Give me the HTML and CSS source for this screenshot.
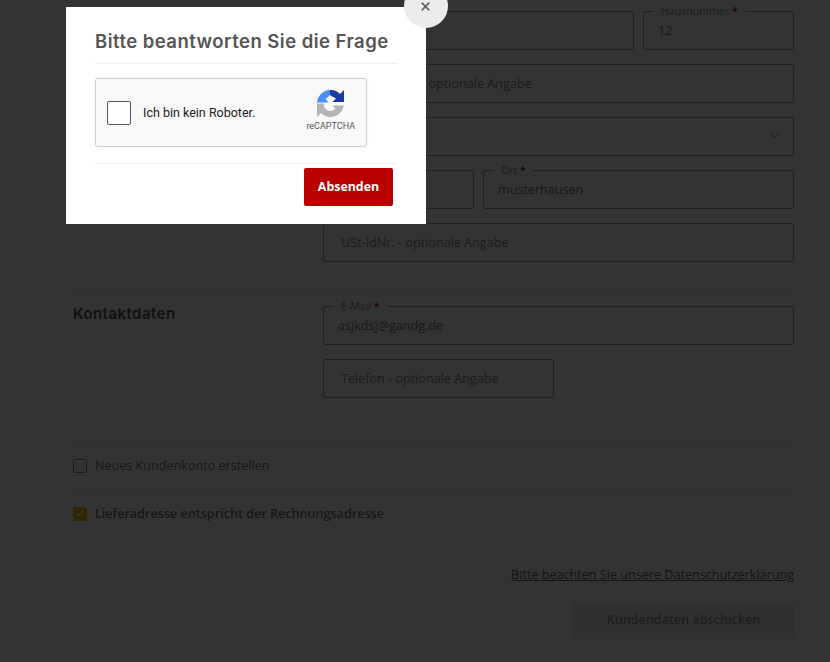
FILE: index.html
```html
<!DOCTYPE html>
<html lang="de">
<head>
    <meta charset="utf-8">
    <title>Kundendaten</title>
    <link rel="stylesheet" href="styles.css">
</head>
<body>
    <div class="page">
        <section class="form_section address_section">
            <div class="section_title"></div>
            <div class="fields">
                <div class="field_row">
                    <div class="field grow"></div>
                    <div class="field house"><span class="legend">Hausnummer <b>*</b></span><span class="value">12</span></div>
                </div>
                <div class="field_row">
                    <div class="field grow"><span class="placeholder">Adresszusatz - optionale Angabe</span></div>
                </div>
                <div class="field_row">
                    <div class="field grow select">
                        <svg class="chevron" width="10" height="6" viewBox="0 0 10 6"><path d="M.7.7 5 5 9.3.7" fill="none" stroke="#777" stroke-width="1"/></svg>
                    </div>
                </div>
                <div class="field_row">
                    <div class="field zip"></div>
                    <div class="field grow"><span class="legend">Ort <b>*</b></span><span class="value">musterhausen</span></div>
                </div>
                <div class="field_row">
                    <div class="field grow"><span class="placeholder">USt-IdNr. - optionale Angabe</span></div>
                </div>
            </div>
        </section>

        <section class="form_section contact_section">
            <h3 class="section_title">Kontaktdaten</h3>
            <div class="fields">
                <div class="field_row">
                    <div class="field grow"><span class="legend">E-Mail <b>*</b></span><span class="value">asjkdsj@gandg.de</span></div>
                </div>
                <div class="field_row">
                    <div class="field phone"><span class="placeholder">Telefon - optionale Angabe</span></div>
                </div>
            </div>
        </section>

        <div class="check_row account_row">
            <span class="check_box"></span>
            <span class="check_label">Neues Kundenkonto erstellen</span>
        </div>
        <div class="check_row delivery_row">
            <span class="check_box checked">
                <svg width="8" height="7" viewBox="0 0 8 7"><path d="M1 3.6 3 5.6 7 1" fill="none" stroke="#fff" stroke-width="1.4"/></svg>
            </span>
            <span class="check_label strong">Lieferadresse entspricht der Rechnungsadresse</span>
        </div>

        <div class="submit_box">
            <a class="privacy" href="#">Bitte beachten Sie unsere Datenschutzerklärung</a>
            <button class="submit">Kundendaten abschicken</button>
        </div>
    </div>

    <div class="overlay"></div>

    <div class="modal">
        <button class="close">
            <svg width="9" height="9" viewBox="0 0 9 9"><path d="M.7.7 8.300 8.300M8.300.7.7 8.300" stroke="#666" stroke-width="1.7"/></svg>
        </button>
        <h2 class="modal_title">Bitte beantworten Sie die Frage</h2>
        <div class="modal_body">
            <div class="captcha">
                <span class="captcha_check"></span>
                <span class="captcha_text">Ich bin kein Roboter.</span>
                <div class="captcha_logo">
                    <svg width="27" height="27" viewBox="0 0 27 27">
                        <path d="M13 0A13.500 13.500 0 0 1 23 4L27 0V12H15.500L19 8.500A7 7 0 0 0 16 7L13 5Z" fill="#1c3aa9"/>
                        <path d="M13 0V5L10.500 7.500A7 7 0 0 0 8.500 9L11.500 12.500H0.100A13.500 13.500 0 0 1 13 0Z" fill="#4a90f0"/>
                        <path d="M0 13.500H7A6.500 6.500 0 0 0 18.500 18.500L15.500 15.500H26.800A13.500 13.500 0 0 1 4 23L0 27Z" fill="#b4b4b4"/>
                    </svg>
                    <span>reCAPTCHA</span>
                </div>
            </div>
        </div>
        <div class="modal_footer">
            <button class="send">Absenden</button>
        </div>
    </div>
</body>
</html>
```

FILE: styles.css
```css
html, body {
    margin: 0;
    height: 100%;
    overflow: hidden;
}
body {
    background-color: #fff;
    font-family: "Open Sans", "Liberation Sans", sans-serif;
    font-size: 12.6px;
    color: #777;
}

.page {
    width: 721px;
    margin-left: 73px;
    padding-top: 11px;
}

.form_section {
    display: flex;
}
.address_section {
    padding-bottom: 29px;
    border-bottom: 1px solid #e4e4e4;
}
.contact_section {
    padding-top: 14px;
    padding-bottom: 5px;
    height: 130px;
}
.section_title {
    width: 250px;
    margin: 0;
    font-family: "Inter", "Liberation Sans", sans-serif;
    font-size: 15px;
    font-weight: 600;
    letter-spacing: 0.45px;
    line-height: 16px;
    color: #555;
}

.fields {
    flex: 1;
}
.field_row {
    display: flex;
    gap: 9px;
    margin-bottom: 14px;
}
.field_row:last-child {
    margin-bottom: 0;
}
.field {
    position: relative;
    box-sizing: border-box;
    height: 39px;
    border: 1px solid #999;
    border-radius: 2px;
    display: flex;
    align-items: center;
    justify-content: space-between;
    padding: 0 14px 1px 17px;
}
.grow { flex: 1; }
.house { width: 151px; }
.zip { width: 151px; }
.phone { width: 231px; }
.field:has(.legend) { padding-left: 14px; }
.select { justify-content: flex-end; }

.legend {
    position: absolute;
    top: -7px;
    left: 10px;
    padding: 0 7px;
    background: #fff;
    font-size: 10.600px;
    line-height: 12px;
    color: #888;
}
.legend b {
    color: #b00000;
    font-weight: 600;
}
.value { color: #777; }
.placeholder { color: #888; }
.chevron { margin-right: -1px; }

.check_row {
    display: flex;
    align-items: center;
    gap: 8px;
    height: 47px;
    border-top: 1px solid #e4e4e4;
}
.check_box {
    box-sizing: border-box;
    width: 14px;
    height: 14px;
    border: 1px solid #888;
    border-radius: 2px;
    display: flex;
    align-items: center;
    justify-content: center;
}
.check_box.checked {
    background: #f5bf00;
    border-color: #f5bf00;
}
.strong { font-weight: 600; }

.submit_box {
    display: flex;
    flex-direction: column;
    align-items: flex-end;
    padding-top: 29px;
}
.privacy {
    color: #666;
    line-height: 18px;
}
.submit {
    margin-top: 18px;
    width: 221px;
    height: 37px;
    padding: 0 0 2px;
    border: 0;
    background: #f0f0f0;
    color: #999;
    font-family: inherit;
    font-size: 12.600px;
    font-weight: 600;
}

.overlay {
    position: fixed;
    inset: 0;
    background: rgba(0, 0, 0, 0.8);
}

.modal {
    position: fixed;
    top: 7px;
    left: 66px;
    box-sizing: border-box;
    width: 360px;
    height: 217px;
    padding: 20px 29px 0;
    background: #fff;
}
.close {
    position: absolute;
    top: -23px;
    right: -22px;
    width: 44px;
    height: 44px;
    padding: 0 1px 0 0;
    border: 0;
    border-radius: 50%;
    background: #ececec;
}
.close svg { display: block; margin: auto; }
.modal_title {
    margin: 0;
    height: 36px;
    font-family: "Inter", "Liberation Sans", sans-serif;
    font-size: 18.500px;
    font-weight: 600;
    letter-spacing: 0.47px;
    line-height: 29px;
    color: #555;
    border-bottom: 1px solid #eee;
}
.modal_body {
    padding: 14px 0 16px;
    border-bottom: 1px solid #eee;
}
.captcha {
    box-sizing: border-box;
    width: 272px;
    height: 69px;
    display: flex;
    align-items: center;
    padding: 0 11px;
    background: #f9f9f9;
    border: 1px solid #d3d3d3;
    border-radius: 3px;
    box-shadow: 0 0 3px rgba(0, 0, 0, 0.08);
}
.captcha_check {
    box-sizing: border-box;
    width: 24px;
    height: 24px;
    background: #fff;
    border: 1px solid #555;
    border-radius: 2px;
}
.captcha_text {
    margin-left: 12px;
    flex: 1;
    font-family: Roboto, "Liberation Sans", sans-serif;
    font-size: 12.500px;
    color: #222;
}
.captcha_logo {
    display: flex;
    flex-direction: column;
    align-items: center;
    margin-bottom: 5px;
    font-family: Roboto, "Liberation Sans", sans-serif;
    font-size: 9px;
    color: #555;
}
.captcha_logo span { margin-top: 4px; }
.modal_footer {
    display: flex;
    justify-content: flex-end;
    padding: 4px 4px 0 0;
}
.send {
    width: 89px;
    height: 38px;
    padding: 0 0 2px;
    border: 0;
    border-radius: 2px;
    background: #bb0000;
    color: #fff;
    font-family: "Open Sans", "Liberation Sans", sans-serif;
    font-size: 12.400px;
    font-weight: 700;
}
```
